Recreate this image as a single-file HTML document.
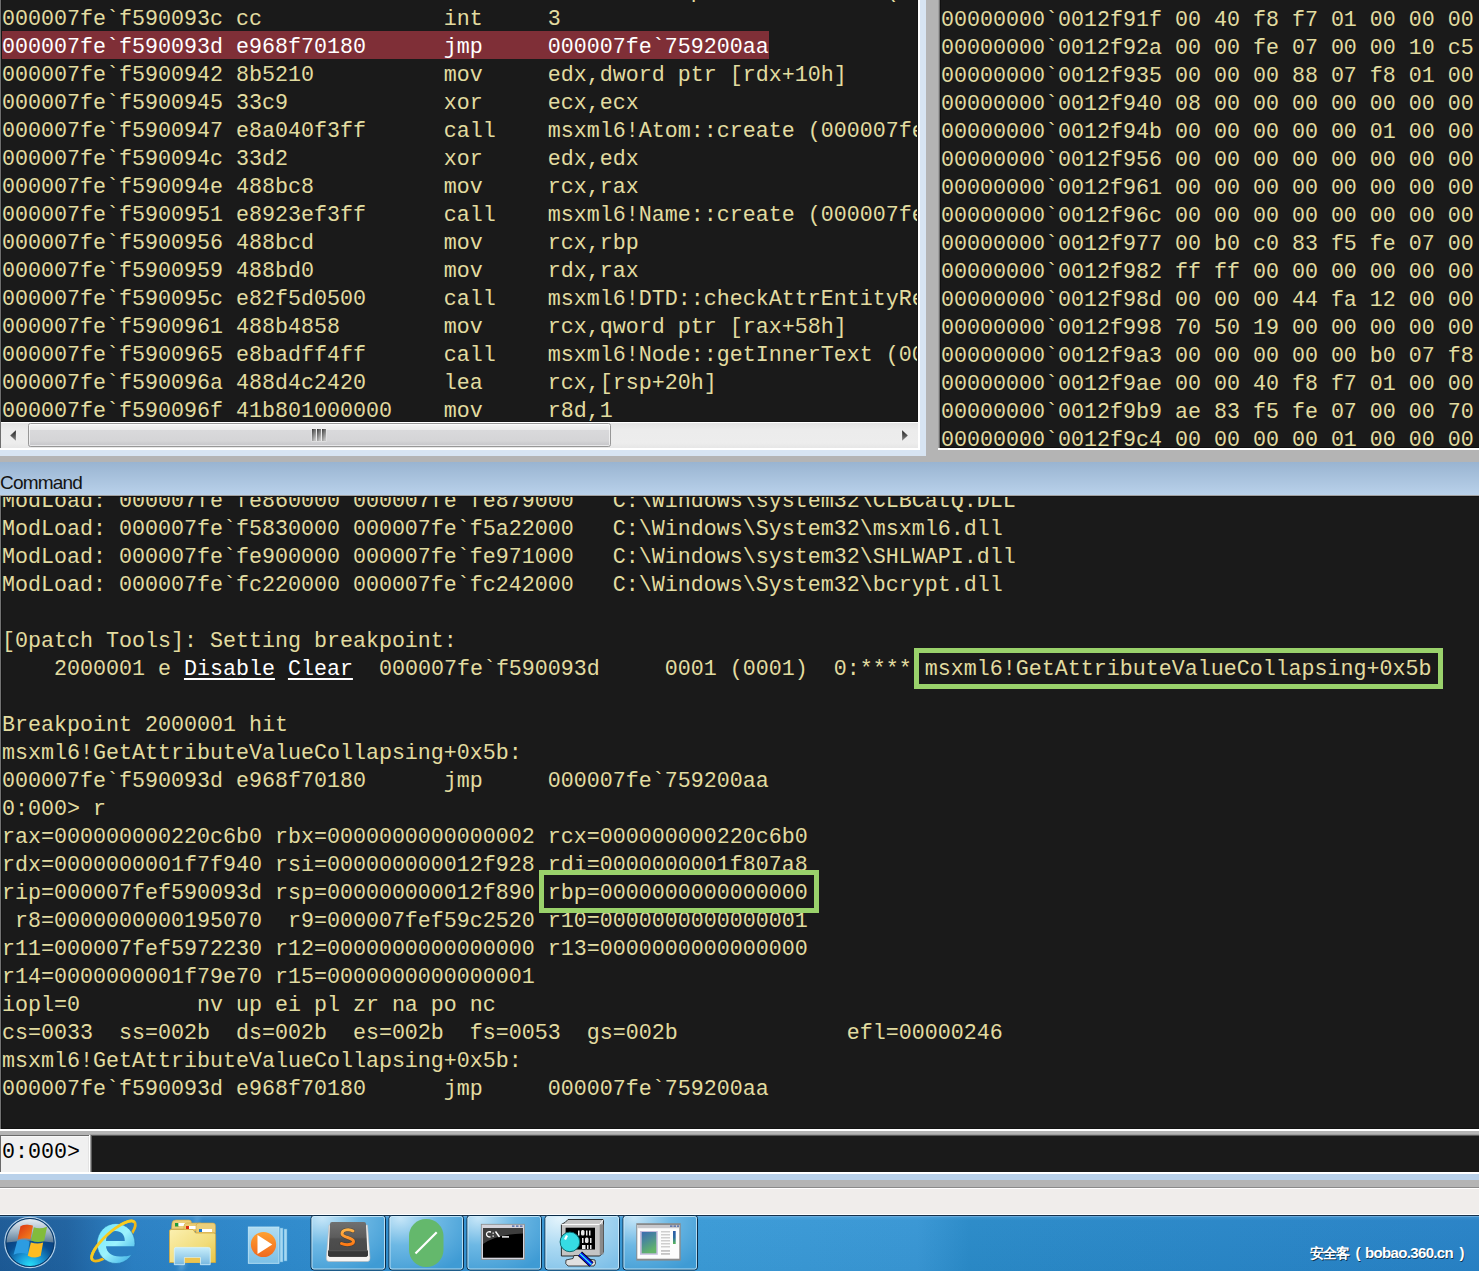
<!DOCTYPE html>
<html><head><meta charset="utf-8">
<style>
*{margin:0;padding:0;box-sizing:border-box}
html,body{width:1479px;height:1271px;overflow:hidden;background:#b4b4b4;position:relative}
.abs{position:absolute}
pre{font-family:"Liberation Mono",monospace;font-size:21.667px;line-height:28px;color:#e2dca0;white-space:pre;position:absolute}
.pane{position:absolute;background:#1a1a1a;overflow:hidden}
.hl{color:#fff}
.lk{color:#fff;text-decoration:underline;text-decoration-thickness:2px;text-underline-offset:3px}
</style></head><body>

<!-- disassembly pane -->
<!-- top area frames -->
<div class="abs" style="left:0;top:0;width:926px;height:456px;background:#d7e4f2"></div>
<div class="abs" style="left:0;top:0;width:920px;height:450px;background:#fff"></div>
<div class="abs" style="left:0;top:0;width:918px;height:448px;background:#6e6e6e"></div>
<div class="abs" style="left:1px;top:0;width:917px;height:423px;background:#151515"></div>
<div class="abs" style="left:1px;top:422px;width:917px;height:1px;background:#fff"></div>
<div class="pane" style="left:2px;top:0;width:915px;height:421px">
<div class="abs" style="left:0;top:31px;width:767px;height:28px;background:#7f2f37"></div>
<pre style="left:0;top:-22px">
                                                     p              (
000007fe`f590093c cc              int     3
<span class="hl">000007fe`f590093d e968f70180      jmp     000007fe`759200aa</span>
000007fe`f5900942 8b5210          mov     edx,dword ptr [rdx+10h]
000007fe`f5900945 33c9            xor     ecx,ecx
000007fe`f5900947 e8a040f3ff      call    msxml6!Atom::create (000007fe`f582ca2f)
000007fe`f590094c 33d2            xor     edx,edx
000007fe`f590094e 488bc8          mov     rcx,rax
000007fe`f5900951 e8923ef3ff      call    msxml6!Name::create (000007fe`f582c8d8)
000007fe`f5900956 488bcd          mov     rcx,rbp
000007fe`f5900959 488bd0          mov     rdx,rax
000007fe`f590095c e82f5d0500      call    msxml6!DTD::checkAttrEntityRef (000007fe`f5956690)
000007fe`f5900961 488b4858        mov     rcx,qword ptr [rax+58h]
000007fe`f5900965 e8badff4ff      call    msxml6!Node::getInnerText (000007fe`f584e928)
000007fe`f590096a 488d4c2420      lea     rcx,[rsp+20h]
000007fe`f590096f 41b801000000    mov     r8d,1
</pre>
</div>

<!-- scrollbar -->
<div class="abs" style="left:1px;top:423px;width:917px;height:25px;background:linear-gradient(#e3e3e3,#ececec 30%,#ededed 80%,#e6e6e6)"></div>
<svg class="abs" style="left:0;top:423px" width="920" height="25">
<defs><linearGradient id="ar" x1="0" y1="0" x2="0" y2="1"><stop offset="0" stop-color="#1e1e1e"/><stop offset="1" stop-color="#8a8a8a"/></linearGradient>
<linearGradient id="th" x1="0" y1="0" x2="0" y2="1"><stop offset="0" stop-color="#f4f4f4"/><stop offset="0.28" stop-color="#e9e9e9"/><stop offset="0.3" stop-color="#d9d9db"/><stop offset="0.75" stop-color="#d5d5d7"/><stop offset="1" stop-color="#c3c3c7"/></linearGradient>
<linearGradient id="gr" x1="0" y1="0" x2="0.6" y2="1"><stop offset="0" stop-color="#1a1a1a"/><stop offset="0.15" stop-color="#505050"/><stop offset="1" stop-color="#c4c4c4"/></linearGradient></defs>
<path d="M10 12.5 L16 7 L16 18 Z" fill="url(#ar)" stroke="#fff" stroke-opacity="0.5" stroke-width="0.5"/>
<path d="M908 12.5 L902 7 L902 18 Z" fill="url(#ar)" stroke="#fff" stroke-opacity="0.5" stroke-width="0.5"/>
<rect x="28.5" y="0.5" width="582" height="23" rx="2" fill="url(#th)" stroke="#979797"/>
<rect x="29.5" y="1.5" width="580" height="21" rx="1" fill="none" stroke="#fff" stroke-opacity="0.6"/>
<rect x="311.5" y="5.5" width="15" height="13" fill="#fff" fill-opacity="0.5"/>
<rect x="312" y="6" width="4" height="12" fill="url(#gr)"/>
<rect x="317" y="6" width="4" height="12" fill="url(#gr)"/>
<rect x="322" y="6" width="4" height="12" fill="url(#gr)"/>
</svg>
<!-- memory pane -->
<div class="abs" style="left:938px;top:0;width:541px;height:450px;background:#fff"></div>
<div class="abs" style="left:938px;top:0;width:541px;height:448px;background:#a0a0a0"></div>
<div class="abs" style="left:939px;top:0;width:540px;height:448px;background:#6e6e6e"></div>
<div class="abs" style="left:940px;top:0;width:539px;height:448px;background:#101010"></div>
<div class="pane" style="left:941px;top:0;width:538px;height:447px">
<pre style="left:0;top:7px">
00000000`0012f91f 00 40 f8 f7 01 00 00 00
00000000`0012f92a 00 00 fe 07 00 00 10 c5
00000000`0012f935 00 00 00 88 07 f8 01 00
00000000`0012f940 08 00 00 00 00 00 00 00
00000000`0012f94b 00 00 00 00 00 01 00 00
00000000`0012f956 00 00 00 00 00 00 00 00
00000000`0012f961 00 00 00 00 00 00 00 00
00000000`0012f96c 00 00 00 00 00 00 00 00
00000000`0012f977 00 b0 c0 83 f5 fe 07 00
00000000`0012f982 ff ff 00 00 00 00 00 00
00000000`0012f98d 00 00 00 44 fa 12 00 00
00000000`0012f998 70 50 19 00 00 00 00 00
00000000`0012f9a3 00 00 00 00 00 b0 07 f8
00000000`0012f9ae 00 00 40 f8 f7 01 00 00
00000000`0012f9b9 ae 83 f5 fe 07 00 00 70
00000000`0012f9c4 00 00 00 00 01 00 00 00
</pre>
</div>

<!-- command title -->
<div class="abs" style="left:0;top:462px;width:1479px;height:33px;background:linear-gradient(#99b4d1,#b9d1ea)"></div>
<div class="abs" style="left:0;top:471px;font-family:'Liberation Sans',sans-serif;font-size:19px;line-height:24px;letter-spacing:-0.8px;color:#141414">Command</div>
<!-- command pane -->
<div class="abs" style="left:0;top:495px;width:1479px;height:636px;background:#fff"></div>
<div class="abs" style="left:0;top:495px;width:1479px;height:634px;background:#a0a0a0"></div>
<div class="abs" style="left:0;top:496px;width:1px;height:633px;background:#727272"></div>
<div class="abs" style="left:1px;top:496px;width:1478px;height:633px;background:#131313"></div>
<div class="pane" style="left:2px;top:497px;width:1477px;height:631px">
<pre style="left:0;top:-9px">ModLoad: 000007fe`fe860000 000007fe`fe879000   C:\Windows\system32\CLBCatQ.DLL
ModLoad: 000007fe`f5830000 000007fe`f5a22000   C:\Windows\System32\msxml6.dll
ModLoad: 000007fe`fe900000 000007fe`fe971000   C:\Windows\system32\SHLWAPI.dll
ModLoad: 000007fe`fc220000 000007fe`fc242000   C:\Windows\System32\bcrypt.dll

[0patch Tools]: Setting breakpoint:
    2000001 e <span class="lk">Disable</span> <span class="lk">Clear</span>  000007fe`f590093d     0001 (0001)  0:**** msxml6!GetAttributeValueCollapsing+0x5b

Breakpoint 2000001 hit
msxml6!GetAttributeValueCollapsing+0x5b:
000007fe`f590093d e968f70180      jmp     000007fe`759200aa
0:000&gt; r
rax=000000000220c6b0 rbx=0000000000000002 rcx=000000000220c6b0
rdx=0000000001f7f940 rsi=000000000012f928 rdi=0000000001f807a8
rip=000007fef590093d rsp=000000000012f890 rbp=0000000000000000
 r8=0000000000195070  r9=000007fef59c2520 r10=0000000000000001
r11=000007fef5972230 r12=0000000000000000 r13=0000000000000000
r14=0000000001f79e70 r15=0000000000000001
iopl=0         nv up ei pl zr na po nc
cs=0033  ss=002b  ds=002b  es=002b  fs=0053  gs=002b             efl=00000246
msxml6!GetAttributeValueCollapsing+0x5b:
000007fe`f590093d e968f70180      jmp     000007fe`759200aa
</pre>
</div>

<!-- green boxes -->
<div class="abs" style="left:914px;top:648px;width:529px;height:41px;border:5px solid #9ad26b"></div>
<div class="abs" style="left:539px;top:870px;width:280px;height:43px;border:5px solid #9ad26b"></div>
<!-- input row -->
<div class="abs" style="left:0;top:1135px;width:89px;height:37px;background:#6a6a6a"></div>
<div class="abs" style="left:1px;top:1136px;width:88px;height:36px;background:#f0f0f0;border-top:1px solid #f8f8f8;border-right:1px solid #e3e3e3"></div>
<div class="abs" style="left:89px;top:1135px;width:1px;height:39px;background:#fff"></div>
<div class="abs" style="left:0;top:1172px;width:1479px;height:2px;background:#fff"></div>
<div class="abs" style="left:90px;top:1134px;width:1389px;height:38px;background:#a0a0a0"></div>
<div class="abs" style="left:91px;top:1135px;width:1388px;height:37px;background:#5a5a5a"></div>
<div class="abs" style="left:92px;top:1136px;width:1387px;height:36px;background:#1a1a1a"></div>
<pre style="left:2px;top:1139px;color:#000">0:000&gt;</pre>
<div class="abs" style="left:0;top:1174px;width:1479px;height:6px;background:#b9d1ea"></div>
<div class="abs" style="left:0;top:1187px;width:1479px;height:1px;background:#8a8a8a"></div>
<div class="abs" style="left:0;top:1188px;width:1479px;height:1px;background:#fff"></div>
<div class="abs" style="left:0;top:1189px;width:1479px;height:25px;background:#f0edeb"></div>
<div class="abs" style="left:0;top:1214px;width:1479px;height:1px;background:#fff"></div>
<!-- taskbar -->
<svg class="abs" style="left:0;top:1215px" width="1479" height="56" viewBox="0 0 1479 56">
<defs>
<linearGradient id="sor" x1="0" y1="0" x2="0" y2="1"><stop offset="0" stop-color="#ffb448"/><stop offset="1" stop-color="#ff7a14"/></linearGradient>
<filter id="blur2" x="-50%" y="-10%" width="200%" height="120%"><feGaussianBlur stdDeviation="2"/></filter>
<linearGradient id="tbg" x1="0" y1="0" x2="1" y2="0">
<stop offset="0" stop-color="#1c5a96"/><stop offset="0.045" stop-color="#1f62a0"/><stop offset="0.09" stop-color="#2a80c4"/><stop offset="0.2" stop-color="#2e8acc"/><stop offset="0.47" stop-color="#3a9ad6"/><stop offset="0.62" stop-color="#3896d4"/><stop offset="0.655" stop-color="#2a8ac8"/><stop offset="1" stop-color="#2882c6"/></linearGradient>
<linearGradient id="tbv" x1="0" y1="0" x2="0" y2="1"><stop offset="0" stop-color="#fff" stop-opacity="0.14"/><stop offset="0.1" stop-color="#fff" stop-opacity="0.02"/><stop offset="1" stop-color="#000" stop-opacity="0.02"/></linearGradient>
<radialGradient id="btn" cx="0.15" cy="0.05" r="1.1"><stop offset="0" stop-color="#c6e6f8"/><stop offset="0.45" stop-color="#6db8e4"/><stop offset="1" stop-color="#3f9bd4"/></radialGradient>
<radialGradient id="btna" cx="0.2" cy="0.05" r="1.1"><stop offset="0" stop-color="#e4f4fc"/><stop offset="0.5" stop-color="#a9d8f2"/><stop offset="1" stop-color="#7fc0e8"/></radialGradient>
<radialGradient id="orb" cx="0.5" cy="1" r="0.75"><stop offset="0" stop-color="#28e4fa"/><stop offset="0.35" stop-color="#1a9ad8"/><stop offset="0.7" stop-color="#0a4e90"/><stop offset="1" stop-color="#0a3c78"/></radialGradient>
<linearGradient id="orbhi" x1="0" y1="0" x2="0" y2="1"><stop offset="0" stop-color="#e8eef4"/><stop offset="0.5" stop-color="#a8bccc"/><stop offset="1" stop-color="#5c7c98"/></linearGradient>
<linearGradient id="iee" x1="0" y1="0" x2="1" y2="1"><stop offset="0" stop-color="#6ee6fb"/><stop offset="0.5" stop-color="#9cf2fd"/><stop offset="1" stop-color="#2ea6e2"/></linearGradient>
<linearGradient id="fold" x1="0" y1="0" x2="1" y2="1"><stop offset="0" stop-color="#fbf0b0"/><stop offset="0.6" stop-color="#f1dc7a"/><stop offset="1" stop-color="#e9c442"/></linearGradient>
<linearGradient id="wmp" x1="0" y1="0" x2="0" y2="1"><stop offset="0" stop-color="#ffa030"/><stop offset="1" stop-color="#f06a20"/></linearGradient>
<linearGradient id="subl" x1="0" y1="0" x2="0" y2="1"><stop offset="0" stop-color="#707070"/><stop offset="0.45" stop-color="#5c5c5c"/><stop offset="0.5" stop-color="#4e4e4e"/><stop offset="1" stop-color="#484848"/></linearGradient>
<linearGradient id="flagsh" x1="0" y1="0" x2="1" y2="1"><stop offset="0" stop-color="#d02010" stop-opacity="0.6"/><stop offset="1" stop-color="#ffb020" stop-opacity="0.6"/></linearGradient>
<linearGradient id="fbase" x1="0" y1="0" x2="0" y2="1"><stop offset="0" stop-color="#c8eefa"/><stop offset="1" stop-color="#78b8e0"/></linearGradient>
<linearGradient id="wmpb" x1="0" y1="0" x2="0" y2="1"><stop offset="0" stop-color="#b0dcf2"/><stop offset="1" stop-color="#7cc0e6"/></linearGradient>
<linearGradient id="pic" x1="0" y1="0" x2="0.4" y2="1"><stop offset="0" stop-color="#3a6ab0"/><stop offset="0.45" stop-color="#4a8a98"/><stop offset="1" stop-color="#62b46a"/></linearGradient>
<linearGradient id="cbar" x1="0" y1="0" x2="0" y2="1"><stop offset="0" stop-color="#2a5aa8"/><stop offset="0.5" stop-color="#2a6aa0"/><stop offset="1" stop-color="#58b858"/></linearGradient>
</defs>
<rect x="0" y="0" width="1479" height="56" fill="url(#tbg)"/>
<rect x="0" y="0" width="1479" height="56" fill="url(#tbv)"/>
<rect x="0" y="0" width="1479" height="1" fill="#15304a"/>
<rect x="0" y="1" width="1479" height="1" fill="#74b0de" fill-opacity="0.8"/>
<path d="M196 2 L200 2 L183 56 L178 56 Z" fill="#bfe8ff" fill-opacity="0.3" filter="url(#blur2)"/>
<!-- start orb -->
<circle cx="30" cy="27.5" r="25.2" fill="none" stroke="#c4dcee" stroke-width="1.2" opacity="0.9"/>
<circle cx="30" cy="27.5" r="24" fill="url(#orb)" stroke="#0a3a68" stroke-width="1"/>
<path d="M6.5 27.5 A23.5 23.5 0 0 1 53.5 27.5 Q30 24 6.5 27.5 Z" fill="url(#orbhi)"/>
<g transform="translate(0.5 -2) scale(0.98)">
<path d="M20.5 13.5 Q26 11 33 13 L30.5 26.5 Q24 25 17.5 27 Z" fill="#e84c1a"/>
<path d="M20.5 13.5 Q26 11 33 13 L30.5 26.5 Q24 25 17.5 27 Z" fill="url(#flagsh)"/>
<path d="M34 14.5 Q40 17 47.5 14 L44.5 28.5 Q38 31 31.2 28 Z" fill="#82bc3c"/>
<path d="M17 28.5 Q24 26 29.8 29 L27.5 42 Q20 39.5 13.3 42.5 Z" fill="#2c9ce2"/>
<path d="M31 30 Q38 32 43.5 30 L41 44 Q35 47 27.8 43.5 Z" fill="#fcbc22"/>
</g>
<!-- IE -->
<g transform="translate(113.5 26) rotate(-42)">
<ellipse cx="0" cy="0" rx="28.3" ry="8.8" fill="none" stroke="#f0b818" stroke-width="2.8"/>
</g>
<ellipse cx="116" cy="28.5" rx="19" ry="20" fill="url(#iee)" stroke="#1f6aa8" stroke-width="0.6"/>
<path d="M106 26 C106 19.5 110 16 115.5 16 C121 16 124.8 19.5 124.8 26 Z" fill="#2a7fc0"/>
<path d="M106 31.3 L136 31.3 L136 37.5 C132 41 126 41.5 120 41.5 C111 41.5 106.5 37 106 31.3 Z" fill="#2a80c2"/>
<g transform="translate(113.5 26) rotate(-42)">
<path d="M-28.3 0 A28.3 8.8 0 0 1 28.3 0" fill="none" stroke="#f8cc20" stroke-width="2.8"/>
</g>
<!-- folder -->
<path d="M171.5 14 L172 8 Q172.5 5 176 5 L189 5 Q191.5 5 191.5 8 L191.5 14 Z" fill="#eccf7a" stroke="#d2a640" stroke-width="0.6"/>
<rect x="175" y="8" width="3.5" height="3.5" fill="#1f9a3a"/><rect x="178.5" y="8" width="9" height="3" fill="#fff"/>
<path d="M184 16 L184 11 Q184 8 187 8 L200 8 Q202.5 8 202.5 11 L202.5 16 Z" fill="#e9cb72" stroke="#d2a640" stroke-width="0.6"/>
<rect x="186" y="11" width="3" height="3" fill="#dc2a10"/><rect x="189" y="11" width="9" height="3" fill="#fff"/>
<path d="M196 18 L196 11 Q196 8 199 8 L213 8 Q215.5 8 215.5 11 L215.5 18 Z" fill="#eccf7a" stroke="#d2a640" stroke-width="0.6"/>
<rect x="199" y="14" width="3" height="3" fill="#1a76d0"/><rect x="202" y="14" width="10" height="3" fill="#fff"/>
<path d="M169.5 16 Q169.5 14.5 171 14.5 L193 14.5 L195.5 18 L214 18 Q215.6 18 215.6 19.5 L215.6 47.5 L169.5 47.5 Z" fill="url(#fold)" stroke="#d4a83c" stroke-width="0.8"/>
<path d="M174.3 34 Q174.3 32.4 176 32.4 L208.5 32.4 Q210.2 32.4 210.2 34 L210.2 49.7 L200.4 49.7 L200.4 42.5 L184.4 42.5 L184.4 49.7 L174.3 49.7 Z" fill="url(#fbase)" stroke="#d8f2fc" stroke-width="0.8"/>
<rect x="184.8" y="42.8" width="15.2" height="5" fill="#ecc450"/>
<!-- WMP -->
<rect x="280" y="13" width="3" height="34" fill="#a6d8f2" stroke="#5aa8d8" stroke-width="0.5"/><rect x="284" y="14" width="3" height="32" fill="#a6d8f2" stroke="#5aa8d8" stroke-width="0.5"/>
<rect x="248.3" y="12" width="30.7" height="36.3" fill="url(#wmpb)" stroke="#c4e8f8" stroke-width="0.8"/>
<circle cx="263.5" cy="29.5" r="12.6" fill="url(#wmp)"/>
<path d="M257.5 20 L257.5 39 L272.3 29.5 Z" fill="#fff"/>
<!-- buttons -->
<g stroke="#0b2c48" stroke-width="1">
<rect x="311" y="0.5" width="74.5" height="54.5" rx="3" fill="url(#btn)"/>
<rect x="389" y="0.5" width="74.5" height="54.5" rx="3" fill="url(#btn)"/>
<rect x="467" y="0.5" width="74.5" height="54.5" rx="3" fill="url(#btn)"/>
<rect x="545" y="0.5" width="74.5" height="54.5" rx="3" fill="url(#btna)"/>
<rect x="623" y="0.5" width="74.5" height="54.5" rx="3" fill="url(#btn)"/>
</g>
<g fill="none" stroke="#d8f0fc" stroke-opacity="0.75" stroke-width="1">
<rect x="312" y="1.5" width="72.5" height="52.5" rx="2"/>
<rect x="390" y="1.5" width="72.5" height="52.5" rx="2"/>
<rect x="468" y="1.5" width="72.5" height="52.5" rx="2"/>
<rect x="546" y="1.5" width="72.5" height="52.5" rx="2"/>
<rect x="624" y="1.5" width="72.5" height="52.5" rx="2"/>
</g>
<!-- sublime -->
<path d="M329 10 L326.3 43 Q326.3 46.5 329 46.5 L367.5 46.5 Q370 46.5 370 43 L367.5 10 Z" fill="#f6f4f2" stroke="#b8b8b8" stroke-width="0.6"/>
<path d="M330 9 Q330 7 332 7 L364 7 Q366 7 366 9 L367.5 41 L328.5 41 Z" fill="url(#subl)"/>
<path d="M328.5 35.8 L367.5 35.8 L367.5 40 Q367.5 41.5 366 41.5 L330 41.5 Q328.5 41.5 328.5 40 Z" fill="#383838" stroke="#111" stroke-width="0.6"/>
<path d="M328.5 35.8 L367.5 35.8" stroke="#707070" stroke-width="0.8"/>
<path d="M353 16 C349.5 13.8 342 14.3 342 18.8 C342 22.8 353.5 22.3 353.5 26.5 C353.5 30 346 30.5 341.5 28.5" fill="none" stroke="#3a2a1a" stroke-width="4" stroke-linecap="round" opacity="0.5"/>
<path d="M353 16 C349.5 13.8 342 14.3 342 18.8 C342 22.8 353.5 22.3 353.5 26.5 C353.5 30 346 30.5 341.5 28.5" fill="none" stroke="url(#sor)" stroke-width="3" stroke-linecap="round"/>
<!-- green pill -->
<rect x="409" y="4" width="34.5" height="48" rx="17" fill="#64b86c"/>
<line x1="415.5" y1="38.5" x2="436.7" y2="17.3" stroke="#fff" stroke-width="2.2"/>
<!-- cmd -->
<rect x="481.3" y="9.3" width="43.3" height="35.2" fill="#d4d4dc" stroke="#8c8c8c" stroke-width="0.8"/>
<rect x="483" y="13.1" width="40" height="29.6" fill="#000"/>
<path d="M483 13.1 L523 13.1 L523 18.5 Q497 19 483 29 Z" fill="#3e3e3e"/>
<g fill="#3a5aa0"><rect x="512" y="10.5" width="2.5" height="1.2"/><rect x="516" y="10.5" width="2.5" height="1.2"/><rect x="520" y="10.5" width="2.5" height="1.2"/></g>
<path d="M491 17 Q487 16 486.5 19 Q486.5 22 490.5 22" fill="none" stroke="#fff" stroke-width="1.3"/>
<rect x="492.5" y="17.5" width="1.3" height="1.3" fill="#fff"/><rect x="492.5" y="20.5" width="1.3" height="1.3" fill="#fff"/>
<line x1="495.5" y1="16.5" x2="499.5" y2="22" stroke="#fff" stroke-width="1.4"/>
<rect x="502" y="21.2" width="7" height="1.4" fill="#fff"/>
<!-- windbg -->
<path d="M565 7.5 L568 4.5 L603.5 4.5 L603.5 37 L599.7 41 L561.4 41 L561.4 9.4 Z" fill="#c4c4c4" stroke="#1a1a1a" stroke-width="0.9"/>
<path d="M561.4 9.4 L599.7 9.4 L603.5 4.5" fill="none" stroke="#ffffff" stroke-width="1"/>
<rect x="599.7" y="9.4" width="3.8" height="30" fill="#8a8a8a"/>
<rect x="565.6" y="12.7" width="29.4" height="21.8" fill="#000"/>
<g fill="#e8e8e8">
<rect x="578" y="15.5" width="1.5" height="5"/><rect x="581" y="15" width="3.5" height="5.5" rx="1.5"/><rect x="586" y="15.5" width="1.5" height="5"/><rect x="589" y="15.5" width="1.5" height="5"/>
<rect x="582" y="23" width="1.5" height="5"/><rect x="585" y="22.5" width="3.5" height="5.5" rx="1.5"/><rect x="590" y="23" width="1.5" height="5"/>
<rect x="582" y="30" width="3.5" height="4"/><rect x="587" y="30" width="1.5" height="4"/><rect x="590" y="30" width="1.5" height="4"/>
</g>
<path d="M574 40.5 L584 40.5 L585 43.5 L595 45 Q596.5 49 594 51 L568 51 Q564.5 49 566 45 L573 43.5 Z" fill="#e0e0e0" stroke="#1a1a1a" stroke-width="0.8"/>
<line x1="580" y1="38.8" x2="591.5" y2="49.5" stroke="#000" stroke-width="6"/>
<line x1="580" y1="38.8" x2="591.5" y2="49.5" stroke="#0818e8" stroke-width="4.5"/>
<line x1="580" y1="38.8" x2="591.5" y2="49.5" stroke="#30e8f8" stroke-width="1.4"/>
<circle cx="569.9" cy="26.9" r="9.8" fill="#36dce4" stroke="#0a6a70" stroke-width="1"/>
<path d="M565 24.5 L567 20.5" stroke="#fff" stroke-width="2.2"/>
<!-- app window -->
<rect x="636.3" y="8.2" width="44.4" height="37.4" fill="#8a8a8a"/>
<rect x="637.3" y="10" width="42" height="33.7" fill="#fcfcfc"/>
<rect x="637.3" y="10" width="42" height="3.2" fill="#c8c8cc"/>
<g fill="#3a5aa0"><rect x="670" y="10.5" width="2.5" height="1.2"/><rect x="673.5" y="10.5" width="2.5" height="1.2"/><rect x="677" y="10.5" width="2" height="1.2"/></g>
<rect x="640" y="16" width="17.8" height="23.8" fill="#c4bcdc"/>
<rect x="641.7" y="17" width="14.6" height="21.3" fill="url(#pic)"/>
<g fill="#c4c4c4"><rect x="661" y="16.2" width="9" height="1.2"/><rect x="661" y="19.2" width="9" height="1.2"/><rect x="661" y="22.2" width="9" height="1.2"/><rect x="661" y="25.2" width="9" height="1.2"/><rect x="661" y="28.2" width="9" height="1.2"/><rect x="661" y="31.2" width="9" height="1.2"/><rect x="661" y="35" width="9" height="1.8"/><rect x="661" y="38" width="9" height="1.8"/></g>
<rect x="673" y="16" width="2.7" height="13" fill="url(#cbar)"/>
<!-- watermark -->
<g font-family="Liberation Sans" font-weight="bold">
<g fill="#000" fill-opacity="0.6" transform="translate(0.8 0.8)">
<text x="1310" y="43" font-size="14" letter-spacing="-1">安全客</text>
<text x="1355.5" y="43" font-size="15">(</text>
<text x="1365" y="43" font-size="15" letter-spacing="-0.65">bobao.360.cn</text>
<text x="1459.5" y="43" font-size="15">)</text>
</g>
<g fill="#fff">
<text x="1310" y="43" font-size="14" letter-spacing="-1">安全客</text>
<text x="1355.5" y="43" font-size="15">(</text>
<text x="1365" y="43" font-size="15" letter-spacing="-0.65">bobao.360.cn</text>
<text x="1459.5" y="43" font-size="15">)</text>
</g>
</g>
</svg>
</body></html>
